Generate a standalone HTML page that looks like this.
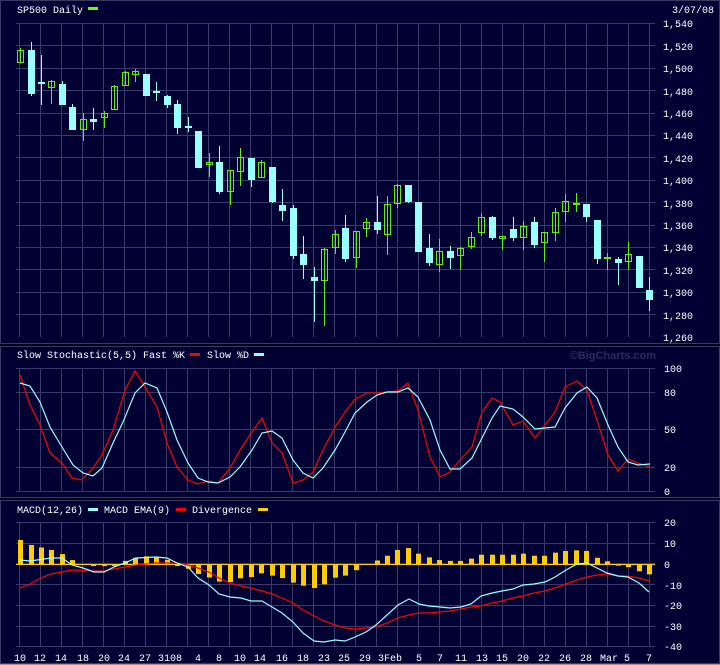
<!DOCTYPE html>
<html><head><meta charset="utf-8"><style>
html,body{margin:0;padding:0;background:#000033;width:720px;height:665px;overflow:hidden}
svg{display:block}
text{font-family:"Liberation Mono",monospace;fill:#fff;font-size:10px}
</style></head><body>
<svg id="s" width="720" height="665" xmlns="http://www.w3.org/2000/svg">
<rect width="720" height="665" fill="#000033"/>
<!-- panel frames -->
<rect x="0.5" y="0.5" width="719" height="343" fill="none" stroke="#3a3a66"/>
<rect x="0" y="344" width="720" height="2" fill="#000014"/>
<rect x="0.5" y="346.5" width="719" height="151" fill="none" stroke="#3a3a66"/>
<rect x="0" y="498" width="720" height="2" fill="#000014"/>
<rect x="0.5" y="500.5" width="719" height="163" fill="none" stroke="#3a3a66"/>
<rect x="0" y="664" width="720" height="1" fill="#999"/>
<g id="grid" stroke="#3a3a6a" stroke-width="1"></g>
<g id="plots"></g>
<!-- texts -->
<text x="17" y="13">SP500 Daily</text><rect x="88" y="7" width="10" height="3" fill="#66ff00"/>
<text x="714" y="13" text-anchor="end">3/07/08</text>
<g id="pl"><text x="663" y="27">1,540</text><text x="663" y="50">1,520</text><text x="663" y="72">1,500</text><text x="663" y="95">1,480</text><text x="663" y="117">1,460</text><text x="663" y="139">1,440</text><text x="663" y="162">1,420</text><text x="663" y="184">1,400</text><text x="663" y="207">1,380</text><text x="663" y="229">1,360</text><text x="663" y="251">1,340</text><text x="663" y="274">1,320</text><text x="663" y="296">1,300</text><text x="663" y="319">1,280</text><text x="663" y="341">1,260</text></g>
<text x="17" y="358">Slow Stochastic(5,5) Fast %K</text><rect x="190" y="353" width="10" height="3" fill="#ff0000"/>
<text x="207" y="358">Slow %D</text><rect x="254" y="353" width="10" height="3" fill="#99ffff"/>
<text x="656" y="359" text-anchor="end" style="fill:#2a2a5e;font-family:'Liberation Sans',sans-serif;font-weight:bold;font-size:11px">©BigCharts.com</text>
<text x="664" y="372">100</text><text x="664" y="396">80</text><text x="664" y="433">50</text><text x="664" y="471">20</text><text x="664" y="495">0</text>
<text x="17" y="513">MACD(12,26)</text><rect x="88" y="508" width="10" height="3" fill="#99ffff"/>
<text x="104" y="513">MACD EMA(9)</text><rect x="176" y="508" width="10" height="3" fill="#ff0000"/>
<text x="192" y="513">Divergence</text><rect x="258" y="508" width="10" height="3" fill="#ffcc00"/>
<text x="664" y="526">20</text><text x="664" y="547">10</text><text x="664" y="568">0</text><text x="664" y="589">-10</text><text x="664" y="609">-20</text><text x="664" y="630">-30</text><text x="664" y="650">-40</text>
<g text-anchor="middle">
<text x="20" y="661">10</text><text x="40" y="661">12</text><text x="61" y="661">14</text><text x="83" y="661">18</text><text x="104" y="661">20</text><text x="124" y="661">24</text><text x="145" y="661">27</text><text x="170" y="661">3108</text><text x="198" y="661">4</text><text x="219" y="661">8</text><text x="240" y="661">10</text><text x="260" y="661">14</text><text x="282" y="661">16</text><text x="303" y="661">18</text><text x="324" y="661">23</text><text x="344" y="661">25</text><text x="365" y="661">29</text><text x="390" y="661">3Feb</text><text x="419" y="661">5</text><text x="440" y="661">7</text><text x="461" y="661">11</text><text x="482" y="661">13</text><text x="502" y="661">15</text><text x="523" y="661">20</text><text x="544" y="661">22</text><text x="565" y="661">26</text><text x="586" y="661">28</text><text x="609" y="661">Mar</text><text x="627" y="661">5</text><text x="649" y="661">7</text>
</g>
</svg>
<script>
var NS="http://www.w3.org/2000/svg";
function el(p,t,a){var e=document.createElementNS(NS,t);for(var k in a)e.setAttribute(k,a[k]);p.appendChild(e);return e;}
var G=document.getElementById('grid'),P=document.getElementById('plots');
function hl(y,x1,x2){el(G,'line',{x1:x1,x2:x2,y1:y+.5,y2:y+.5});}
function vl(x,y1,y2){el(G,'line',{x1:x+.5,x2:x+.5,y1:y1,y2:y2});}
var i;
for(i=0;i<14;i++)hl(Math.round(23+i*22.4),16,655);
for(i=0;i<31;i++)vl(Math.round(19+21*i),23,337);
[368,392,429,467,491].forEach(function(y){hl(y,16,655)});
for(i=0;i<31;i++)vl(Math.round(19+21*i),368,491);
for(i=0;i<7;i++)hl(Math.round(522+i*20.7),16,655);
for(i=0;i<31;i++)vl(Math.round(19+21*i),522,646);
// candles: [x, top, bottom, wickHigh, wickLow, green]
var C=[[20,50,63,48,63,1],[30.5,50,94,42,96,0],[41,82,84,55,105,0],[51,81,88,80,104,1],[62,84,105,81,105,0],[72,107,130,104,130,0],[83,119,130,113,141,1],[93,119,122,108,130,0],[104,113,118,111,128,1],[114,86,110,85,110,1],[125,72,86,71,86,1],[135,71,75,69,82,1],[146,74,96,74,96,0],[156,91,93,82,101,0],[167,96,105,95,108,0],[177,104,128,100,134,0],[188,126,128,117,132,0],[198,131,168,131,168,0],[209,162,165,153,177,1],[219,162,192,146,194,0],[230,170,192,170,205,1],[240,157,172,148,186,1],[251,158,180,158,187,0],[261,162,178,160,178,1],[272,167,202,167,203,0],[282,205,211,189,221,0],[293,208,256,205,259,0],[303,254,265,236,279,0],[314,277,281,267,322,0],[324,249,281,248,326,1],[335,234,248,230,254,1],[345,228,259,215,262,0],[356,231,258,231,268,1],[366,222,229,218,237,1],[377,222,230,196,234,0],[387,204,235,196,255,1],[397,185,204,184,208,1],[408,185,202,185,203,0],[418,202,252,202,252,0],[429,248,263,234,266,0],[439,251,265,239,272,1],[450,251,258,246,269,0],[460,248,256,247,270,1],[471,237,247,232,249,1],[481,217,233,213,236,1],[492,217,238,216,240,0],[502,236,239,236,250,1],[513,229,238,217,241,0],[523,226,238,221,250,1],[534,222,245,217,248,0],[544,232,243,232,262,1],[555,212,233,208,241,1],[565,201,212,194,222,1],[576,203,205,193,212,1],[586,204,217,204,222,0],[597,220,259,220,264,0],[607,257,259,253,270,1],[618,259,263,257,285,0],[628,254,262,242,270,1],[639,256,288,256,288,0],[649,290,300,277,311,0]];
C.forEach(function(c){var x=Math.round(c[0]);var col=c[5]?'#66ee00':'#99ffff';
el(P,'rect',{x:x,y:c[3],width:1,height:Math.max(1,c[4]-c[3]),fill:col});
if(c[5])el(P,'rect',{x:x-2.5,y:c[1]+.5,width:6,height:Math.max(1,c[2]-c[1]-1),fill:'none',stroke:col,'stroke-width':1});
else el(P,'rect',{x:x-3,y:c[1],width:7,height:Math.max(2,c[2]-c[1]),fill:col});});
function pl(pts,col){el(P,'polyline',{points:pts.map(function(p){return p.join(',')}).join(' '),fill:'none',stroke:col,'stroke-width':1.2});}
// histogram
var H=[11.6,9.2,8,6.8,4.8,1.9,-.5,-1,-1,-1,1.5,3,3.7,3.3,2,-1,-2.3,-4.8,-6.5,-8.5,-8.7,-6.9,-6.3,-4.5,-5.6,-6.8,-9,-10.5,-11.6,-9.8,-6.6,-5.6,-3,0,1.7,4,6.8,7.7,5,3.2,1.9,1.5,1.5,2.6,4.5,4.5,4.5,4.5,5,4,4,5.5,6.3,6.6,6.3,3,1.3,-.8,-1.5,-3.5,-5];
H.forEach(function(v,k){var x=Math.round(C[k][0]);var y0=564,y1=564-v*2.07;el(P,'rect',{x:x-2,y:Math.min(y0,y1),width:5,height:Math.max(1,Math.abs(y1-y0)),fill:'#ffcc00'});});
el(P,'rect',{x:16,y:564,width:639,height:1,fill:'#ffcc00'});
pl([[20,588],[30,584],[41,578],[51,574],[62,572],[72,570],[94,571],[104,571],[114,569],[125,567],[136,565],[156,563],[167,563],[177,563],[188,565],[198,568],[209,572],[219,578],[230,583],[241,586],[251,588],[262,591],[272,594],[282,598],[293,603],[303,610],[314,616],[324,621],[335,625],[345,628],[355,629],[366,628],[376,627],[387,623],[398,618],[409,615],[419,613],[429,613],[440,612],[450,611],[461,609],[471,607],[481,606],[492,603],[502,601],[513,598],[523,596],[534,593],[545,591],[555,588],[566,584],[577,580],[587,577],[597,575],[607,574],[618,576],[628,576],[639,578],[649,581]],'#ff0000');
pl([[20,560],[30,561],[51,558],[62,558],[72,565],[83,568],[94,572],[104,572],[114,567],[125,563],[136,558],[156,557],[167,558],[177,563],[188,567],[198,578],[209,585],[219,594],[230,597],[241,598],[251,601],[262,601],[272,607],[282,613],[293,622],[303,633],[314,641],[324,642],[335,640],[345,641],[355,637],[366,632],[376,625],[387,615],[398,605],[409,599],[419,604],[429,606],[440,607],[450,608],[461,607],[471,604],[481,596],[492,593],[502,591],[513,589],[523,585],[534,584],[545,582],[555,577],[566,570],[577,564],[587,563],[597,568],[607,573],[618,576],[628,577],[639,583],[649,592]],'#99ffff');
// stochastic
pl([[20,375],[30,405],[40,425],[50,453],[62,463],[72,478],[82,480],[93,468],[102,455],[113,430],[125,390],[135,371],[145,387],[157,407],[167,443],[177,467],[188,480],[198,484],[208,481],[218,483],[230,468],[240,450],[252,432],[262,418],[272,443],[282,453],[293,483],[303,480],[313,472],[323,450],[335,427],[345,412],[355,399],[367,393],[377,393],[387,392],[398,391],[408,383],[418,410],[430,457],[440,477],[450,472],[460,460],[472,447],[482,412],[492,398],[500,402],[513,425],[523,421],[535,438],[545,425],[555,412],[565,387],[577,381],[587,390],[597,420],[608,455],[618,471],[628,459],[638,463],[650,467]],'#ff0000');
pl([[20,383],[30,386],[40,402],[50,427],[62,447],[73,465],[83,473],[93,476],[102,468],[113,443],[123,422],[135,393],[145,383],[157,388],[167,412],[177,440],[188,463],[198,478],[208,482],[218,483],[230,477],[240,467],[252,450],[262,433],[272,431],[282,438],[293,460],[303,473],[313,478],[323,468],[335,450],[345,432],[355,413],[367,402],[377,395],[387,392],[398,392],[408,388],[418,397],[430,420],[440,450],[450,469],[460,469],[472,458],[482,438],[492,418],[500,406],[513,409],[523,417],[535,429],[545,428],[555,427],[565,408],[577,393],[587,387],[597,398],[608,425],[618,447],[628,462],[638,465],[650,464]],'#99ffff');
</script>
</body></html>
